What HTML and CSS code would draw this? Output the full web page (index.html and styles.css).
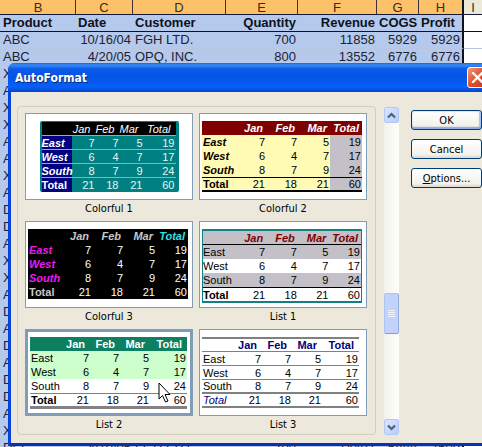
FILE: index.html
```html
<!DOCTYPE html>
<html lang="en">
<head>
    <meta charset="UTF-8">
    <meta name="viewport" content="width=device-width, initial-scale=1.0">
    <title>AutoFormat</title>
    <link rel="stylesheet" href="styles.css">
</head>
<body>
    <table class="sheet">
        <colgroup>
            <col class="col-b"><col class="col-c"><col class="col-d"><col class="col-e">
            <col class="col-f"><col class="col-g"><col class="col-h"><col>
        </colgroup>
        <thead>
            <tr class="letters"><th>B</th><th>C</th><th>D</th><th>E</th><th>F</th><th>G</th><th>H</th><th>I</th></tr>
            <tr class="titles"><th>Product</th><th>Date</th><th>Customer</th><th class="num">Quantity</th><th class="num">Revenue</th><th class="num">COGS</th><th>Profit</th><th></th></tr>
        </thead>
        <tbody>
            <tr><td>ABC</td><td class="num">10/16/04</td><td>FGH LTD.</td><td class="num">700</td><td class="num">11858</td><td class="num">5929</td><td class="num">5929</td><td></td></tr>
            <tr><td>ABC</td><td class="num">4/20/05</td><td>OPQ, INC.</td><td class="num">800</td><td class="num">13552</td><td class="num">6776</td><td class="num">6776</td><td></td></tr>
            <tr><td>XYZ</td><td></td><td></td><td></td><td></td><td></td><td></td><td></td></tr>
            <tr><td>ABC</td><td></td><td></td><td></td><td></td><td></td><td></td><td></td></tr>
            <tr><td>XYZ</td><td></td><td></td><td></td><td></td><td></td><td></td><td></td></tr>
            <tr><td>XYZ</td><td></td><td></td><td></td><td></td><td></td><td></td><td></td></tr>
            <tr><td>ABC</td><td></td><td></td><td></td><td></td><td></td><td></td><td></td></tr>
            <tr><td>ABC</td><td></td><td></td><td></td><td></td><td></td><td></td><td></td></tr>
            <tr><td>XYZ</td><td></td><td></td><td></td><td></td><td></td><td></td><td></td></tr>
            <tr><td>ABC</td><td></td><td></td><td></td><td></td><td></td><td></td><td></td></tr>
            <tr><td>DEF</td><td></td><td></td><td></td><td></td><td></td><td></td><td></td></tr>
            <tr><td>DEF</td><td></td><td></td><td></td><td></td><td></td><td></td><td></td></tr>
            <tr><td>ABC</td><td></td><td></td><td></td><td></td><td></td><td></td><td></td></tr>
            <tr><td>XYZ</td><td></td><td></td><td></td><td></td><td></td><td></td><td></td></tr>
            <tr><td>XYZ</td><td></td><td></td><td></td><td></td><td></td><td></td><td></td></tr>
            <tr><td>ABC</td><td></td><td></td><td></td><td></td><td></td><td></td><td></td></tr>
            <tr><td>DEF</td><td></td><td></td><td></td><td></td><td></td><td></td><td></td></tr>
            <tr><td>ABC</td><td></td><td></td><td></td><td></td><td></td><td></td><td></td></tr>
            <tr><td>DEF</td><td></td><td></td><td></td><td></td><td></td><td></td><td></td></tr>
            <tr><td>ABC</td><td></td><td></td><td></td><td></td><td></td><td></td><td></td></tr>
            <tr><td>DEF</td><td></td><td></td><td></td><td></td><td></td><td></td><td></td></tr>
            <tr><td>DEF</td><td></td><td></td><td></td><td></td><td></td><td></td><td></td></tr>
            <tr><td>ABC</td><td></td><td></td><td></td><td></td><td></td><td></td><td></td></tr>
            <tr><td>XYZ</td><td></td><td></td><td></td><td></td><td></td><td></td><td></td></tr>
            <tr><td>DEF</td><td class="num">4/10/05</td><td>FGH LTD.</td><td class="num">700</td><td class="num">14497</td><td class="num">6888</td><td class="num">7609</td><td></td></tr>
        </tbody>
    </table>

    <div class="dialog" role="dialog" aria-labelledby="dialog-title">
        <div class="titlebar">
            <span id="dialog-title">AutoFormat</span>
            <button class="close" aria-label="Close">
                <svg width="13" height="13" viewBox="0 0 13 13"><path d="M2 2 L11 11 M11 2 L2 11" stroke="#fff" stroke-width="2.4" stroke-linecap="round"/></svg>
            </button>
        </div>
        <div class="dialog-body">
            <div class="formats">
                <figure class="format">
                    <div class="preview">
                        <table class="mini colorful1">
                            <tr><th></th><th>Jan</th><th>Feb</th><th>Mar</th><th>Total</th></tr>
                            <tr><td>East</td><td>7</td><td>7</td><td>5</td><td>19</td></tr>
                            <tr><td>West</td><td>6</td><td>4</td><td>7</td><td>17</td></tr>
                            <tr><td>South</td><td>8</td><td>7</td><td>9</td><td>24</td></tr>
                            <tr><td>Total</td><td>21</td><td>18</td><td>21</td><td>60</td></tr>
                        </table>
                    </div>
                    <figcaption><input type="radio" name="format" id="f1"><label for="f1">Colorful 1</label></figcaption>
                </figure>
                <figure class="format">
                    <div class="preview">
                        <table class="mini colorful2">
                            <tr><th></th><th>Jan</th><th>Feb</th><th>Mar</th><th>Total</th></tr>
                            <tr><td>East</td><td>7</td><td>7</td><td>5</td><td>19</td></tr>
                            <tr><td>West</td><td>6</td><td>4</td><td>7</td><td>17</td></tr>
                            <tr><td>South</td><td>8</td><td>7</td><td>9</td><td>24</td></tr>
                            <tr><td>Total</td><td>21</td><td>18</td><td>21</td><td>60</td></tr>
                        </table>
                    </div>
                    <figcaption><input type="radio" name="format" id="f2"><label for="f2">Colorful 2</label></figcaption>
                </figure>
                <figure class="format">
                    <div class="preview">
                        <table class="mini colorful3">
                            <tr><th></th><th>Jan</th><th>Feb</th><th>Mar</th><th>Total</th></tr>
                            <tr><td>East</td><td>7</td><td>7</td><td>5</td><td>19</td></tr>
                            <tr><td>West</td><td>6</td><td>4</td><td>7</td><td>17</td></tr>
                            <tr><td>South</td><td>8</td><td>7</td><td>9</td><td>24</td></tr>
                            <tr><td>Total</td><td>21</td><td>18</td><td>21</td><td>60</td></tr>
                        </table>
                    </div>
                    <figcaption><input type="radio" name="format" id="f3"><label for="f3">Colorful 3</label></figcaption>
                </figure>
                <figure class="format">
                    <div class="preview">
                        <table class="mini list1">
                            <tr><th></th><th>Jan</th><th>Feb</th><th>Mar</th><th>Total</th></tr>
                            <tr><td>East</td><td>7</td><td>7</td><td>5</td><td>19</td></tr>
                            <tr><td>West</td><td>6</td><td>4</td><td>7</td><td>17</td></tr>
                            <tr><td>South</td><td>8</td><td>7</td><td>9</td><td>24</td></tr>
                            <tr><td>Total</td><td>21</td><td>18</td><td>21</td><td>60</td></tr>
                        </table>
                    </div>
                    <figcaption><input type="radio" name="format" id="f4"><label for="f4">List 1</label></figcaption>
                </figure>
                <figure class="format selected">
                    <div class="preview">
                        <table class="mini list2">
                            <tr><th></th><th>Jan</th><th>Feb</th><th>Mar</th><th>Total</th></tr>
                            <tr><td>East</td><td>7</td><td>7</td><td>5</td><td>19</td></tr>
                            <tr><td>West</td><td>6</td><td>4</td><td>7</td><td>17</td></tr>
                            <tr><td>South</td><td>8</td><td>7</td><td>9</td><td>24</td></tr>
                            <tr><td>Total</td><td>21</td><td>18</td><td>21</td><td>60</td></tr>
                        </table>
                        <svg class="pointer" width="13" height="21" viewBox="0 0 13 21"><path d="M1 1 V17 L4.5 13.5 L7.5 20 L10 19 L7 12.5 H12 Z" fill="#fff" stroke="#000"/></svg>
                    </div>
                    <figcaption><input type="radio" name="format" id="f5" checked><label for="f5">List 2</label></figcaption>
                </figure>
                <figure class="format">
                    <div class="preview">
                        <table class="mini list3">
                            <tr><th></th><th>Jan</th><th>Feb</th><th>Mar</th><th>Total</th></tr>
                            <tr><td>East</td><td>7</td><td>7</td><td>5</td><td>19</td></tr>
                            <tr><td>West</td><td>6</td><td>4</td><td>7</td><td>17</td></tr>
                            <tr><td>South</td><td>8</td><td>7</td><td>9</td><td>24</td></tr>
                            <tr><td>Total</td><td>21</td><td>18</td><td>21</td><td>60</td></tr>
                        </table>
                    </div>
                    <figcaption><input type="radio" name="format" id="f6"><label for="f6">List 3</label></figcaption>
                </figure>
            </div>
            <div class="scrollbar">
                <button class="arrow" aria-label="Scroll up">
                    <svg width="9" height="7" viewBox="0 0 9 7"><path d="M1 5.5 L4.5 2 L8 5.5" fill="none" stroke="#4d6185" stroke-width="2.2"/></svg>
                </button>
                <div class="track-above"></div>
                <div class="thumb"><i></i><i></i><i></i><i></i></div>
                <div class="track-below"></div>
                <button class="arrow" aria-label="Scroll down">
                    <svg width="9" height="7" viewBox="0 0 9 7"><path d="M1 1.5 L4.5 5 L8 1.5" fill="none" stroke="#4d6185" stroke-width="2.2"/></svg>
                </button>
            </div>
            <div class="actions">
                <button class="action default">OK</button>
                <button class="action">Cancel</button>
                <button class="action"><u>O</u>ptions...</button>
            </div>
        </div>
    </div>
</body>
</html>
```
FILE: styles.css
```css
body {
    margin: 0;
    height: 100vh;
    overflow: hidden;
    position: relative;
    background: #fff;
    font-family: "Liberation Sans", Arial, sans-serif;
}

/* worksheet behind the dialog */
.sheet {
    width: 100%;
    table-layout: fixed;
    border-collapse: separate;
    border-spacing: 0;
    font-size: 13px;
    line-height: 16px;
    color: #1c2233;
}
.col-b { width: 76px; }
.col-c { width: 57px; }
.col-d { width: 93px; }
.col-e { width: 72px; }
.col-f { width: 79px; }
.col-g { width: 42px; }
.col-h { width: 45px; }
.sheet th, .sheet td {
    box-sizing: border-box;
    height: 17px;
    padding: 0 2px;
    text-align: left;
    white-space: nowrap;
    background: #b5c9ec;
    border-bottom: 1px solid #b9c6df;
}
.sheet td:first-child, .sheet th:first-child {
    padding-left: 3px;
}
.sheet .num {
    text-align: right;
}
.sheet .letters th {
    height: 15px;
    line-height: 13px;
    font-weight: normal;
    text-align: center;
    color: #3b2a14;
    background: #fdc269;
    border-right: 1px solid #3a3040;
    border-bottom: 1px solid #14183a;
}
.sheet .titles th {
    color: #0d1220;
    border-bottom: 1px solid #10131c;
}
.sheet th:nth-child(7), .sheet td:nth-child(7) {
    border-right: 2px solid #10131c;
}
.sheet .letters th:last-child {
    background: #ece9d8;
    border-right: 0;
    padding: 0;
}
.sheet td:last-child, .sheet .titles th:last-child {
    background: #fff;
}

/* dialog window */
.dialog {
    position: absolute;
    left: 8px;
    right: -15px;
    top: 63px;
    background: #ece9dc;
    border: 3px solid #0842d8;
    border-top: 0;
    border-bottom-color: #0831b4;
    border-radius: 7px 7px 0 0;
    font-family: "DejaVu Sans Condensed", Tahoma, sans-serif;
    font-size: 11px;
    color: #000;
}
.titlebar {
    display: flex;
    align-items: center;
    justify-content: space-between;
    height: 29px;
    margin: 0 -3px;
    padding: 0 9px 0 7px;
    box-sizing: border-box;
    border-radius: 7px 7px 0 0;
    background: linear-gradient(#1c62dc 0, #3a8af4 2px, #0a5ae8 6px, #0553e4 14px, #0560f8 24px, #0444c8 29px);
    color: #fff;
    font-size: 12px;
    font-weight: bold;
    text-shadow: 1px 1px 0 #0a2a80;
}
.close {
    display: flex;
    align-items: center;
    justify-content: center;
    width: 21px;
    height: 21px;
    padding: 0;
    border: 1px solid #fff;
    border-radius: 3px;
    background: linear-gradient(135deg, #f09a80, #e0502c 50%, #c03a14);
}
.dialog-body {
    display: flex;
    padding: 14px 12px 8px 6px;
}
.formats {
    flex: 1;
    display: grid;
    grid-template-columns: 1fr 1fr;
    gap: 3px 6px;
    padding: 6px 8px 0 7px;
    border: 1px solid #d2cfbd;
    border-radius: 4px;
}
.format {
    margin: 0;
}
.preview {
    position: relative;
    box-sizing: border-box;
    height: 87px;
    padding: 7px 2px;
    background: #fff;
    border: 1px solid #7f9db9;
}
.selected .preview {
    border-width: 3px;
    padding-top: 5px;
}
.format figcaption {
    line-height: 18px;
    text-align: center;
}
.format input {
    position: absolute;
    opacity: 0;
    pointer-events: none;
}
.pointer {
    position: absolute;
    left: 130px;
    top: 50px;
}

/* format previews */
.mini {
    width: 160px;
    table-layout: fixed;
    border-collapse: separate;
    border-spacing: 0;
    font-family: "Liberation Sans", Arial, sans-serif;
    font-size: 11px;
    line-height: 12px;
}
.mini th, .mini td {
    box-sizing: border-box;
    height: 14px;
    padding: 0 1px 0 0;
    text-align: right;
    white-space: nowrap;
}
.mini th {
    padding-right: 3px;
}
.mini td:first-child {
    text-align: left;
    padding: 0 0 0 1px;
}

.colorful1 {
    width: 139px;
    margin: 0 auto;
    background: #008080;
    border: 2px solid #008080;
    border-top-width: 1px;
    border-right-width: 3px;
    border-bottom: 0;
    border-radius: 2px;
    color: #e4f4f4;
}
.colorful1 th {
    background: #000;
    color: #fff;
    font-weight: normal;
    font-style: italic;
    padding-right: 5px;
}
.colorful1 th:first-child {
    width: 30px;
    padding: 0;
}
.colorful1 th:nth-child(n+2) {
    width: 24px;
    box-sizing: border-box;
}
.colorful1 th:last-child {
    width: auto;
}
.colorful1 tr:not(:last-child) > * {
    border-bottom: 1px solid #19e4e4;
}
.colorful1 td:first-child {
    background: #000080;
    color: #fff;
    font-weight: bold;
    font-style: italic;
    padding-left: 0;
}
.colorful1 tr:last-child td:first-child {
    font-style: normal;
}

.colorful2 {
    background: #fffbb4;
}
.colorful2 th {
    background: #800000;
    color: #fff;
    font-style: italic;
}
.colorful2 td:first-child {
    font-weight: bold;
    font-style: italic;
}
.colorful2 td:last-child {
    background: #c4c0c8;
}
.colorful2 tr:last-child td {
    border-top: 1px solid #000;
    border-bottom: 2px solid #000;
    font-style: normal;
    height: 15px;
}

.colorful3 {
    background: #000;
    color: #fff;
}
.colorful3 th {
    color: #c8c8c8;
    font-style: italic;
}
.colorful3 th:last-child {
    color: #2fe0e4;
}
.colorful3 td:first-child {
    color: #f018f0;
    font-weight: bold;
    font-style: italic;
}
.colorful3 tr:last-child td:first-child {
    color: #c8c8c8;
    font-style: normal;
}

.list1 {
    border: 2px solid #108080;
    border-width: 2px 1px;
}
.list1 tr:nth-child(-2n+5) td {
    background: #fff;
}
.list1 th, .list1 tr:nth-child(2n) td {
    background: #c4c0c8;
}
.list1 th {
    color: #800000;
    font-style: italic;
    border-bottom: 1px solid #000;
}
.list1 td:first-child {
    padding-left: 0;
}
.list1 tr:last-child td {
    border-top: 1px solid #000;
}
.list1 tr:last-child td:first-child {
    font-weight: bold;
}

.list2, .list3 {
    width: 157px;
}
.list2 th, .list3 th {
    width: 30px;
    padding-right: 5px;
}
.list2 th:last-child, .list3 th:last-child {
    width: auto;
}
.list2 th {
    background: #0c8060;
    color: #fff;
}
.list2 tr:nth-child(2) td, .list2 tr:nth-child(3) td {
    background: #ccffcc;
}
.list2 tr:last-child td {
    height: 16px;
    border-top: 1px solid #808080;
    border-bottom: 3px solid #858085;
}
.list2 tr:last-child td:first-child {
    font-weight: bold;
}

.list3 th {
    color: #000080;
    border-top: 2px solid #808080;
}
.list3 tr > * {
    border-bottom: 1px solid #808080;
}
.list3 tr:nth-last-child(-n+2) td {
    border-bottom-width: 2px;
}
.list3 tr:last-child td:first-child {
    color: #000080;
    font-style: italic;
}

/* scrollbar */
.scrollbar {
    display: flex;
    flex-direction: column;
    width: 15px;
    margin: 1px 12px 0 8px;
    background: linear-gradient(90deg, #f3f1ec, #fefefb);
}
.arrow, .thumb {
    box-sizing: border-box;
    border: 1px solid #b4c8f6;
    border-radius: 2px;
    background: linear-gradient(135deg, #dce6fe, #b9cbf8);
}
.arrow {
    display: flex;
    align-items: center;
    justify-content: center;
    height: 16px;
    padding: 0;
}
.track-above {
    flex: 2;
}
.track-below {
    flex: 1;
}
.thumb {
    display: flex;
    flex-direction: column;
    align-items: center;
    justify-content: center;
    gap: 1px;
    height: 41px;
    background: #c3d2fb;
    border-color: #b0c4f4 #94aee0 #7f9cd4 #b0c4f4;
}
.thumb i {
    width: 7px;
    height: 1px;
    background: #eef4fe;
}

/* dialog buttons */
.actions {
    display: flex;
    flex-direction: column;
    gap: 9px;
    width: 71px;
    padding-top: 4px;
}
.action {
    height: 20px;
    padding: 0;
    border: 1px solid #003c74;
    border-radius: 3px;
    background: linear-gradient(#fff, #f3f2ec 80%, #dcd8cc);
    font: inherit;
    color: #000;
}
.default {
    box-shadow: inset 0 -2px 1px #89ade4, inset 0 1px 1px #cee7ff, inset -2px 0 1px #a9c2ee;
}
```
